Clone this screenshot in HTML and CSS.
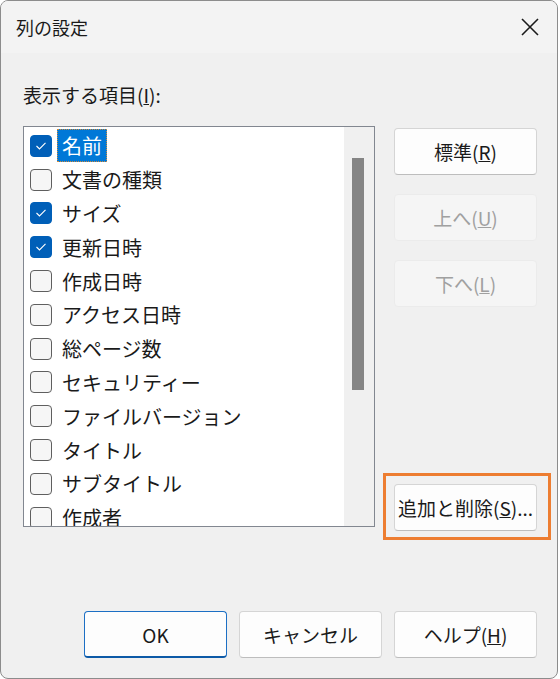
FILE: index.html
```html
<!DOCTYPE html>
<html lang="ja">
<head>
<meta charset="utf-8">
<title>列の設定</title>
<link rel="stylesheet" href="styles.css">
</head>
<body>
<div class="window">
  <div class="titlebar">
    <span class="title">列の設定</span>
    <span class="close">
      <svg width="20" height="20" viewBox="0 0 20 20"><path d="M2 2 L18 18 M18 2 L2 18" stroke="#1a1a1a" stroke-width="1.6" fill="none"/></svg>
    </span>
  </div>
  <div class="content">
    <div class="label">表示する項目(<u>I</u>):</div>
    <div class="main">
      <div class="listbox">
        <div class="items">
          <div class="item"><span class="cb checked"><svg width="12" height="10" viewBox="0 0 12 10"><path d="M1.5 5 L4.5 8 L10.5 1.8" stroke="#fff" stroke-width="1.1" fill="none"/></svg></span><span class="text selected">名前</span></div>
          <div class="item"><span class="cb"></span><span class="text">文書の種類</span></div>
          <div class="item"><span class="cb checked"><svg width="12" height="10" viewBox="0 0 12 10"><path d="M1.5 5 L4.5 8 L10.5 1.8" stroke="#fff" stroke-width="1.1" fill="none"/></svg></span><span class="text">サイズ</span></div>
          <div class="item"><span class="cb checked"><svg width="12" height="10" viewBox="0 0 12 10"><path d="M1.5 5 L4.5 8 L10.5 1.8" stroke="#fff" stroke-width="1.1" fill="none"/></svg></span><span class="text">更新日時</span></div>
          <div class="item"><span class="cb"></span><span class="text">作成日時</span></div>
          <div class="item"><span class="cb"></span><span class="text">アクセス日時</span></div>
          <div class="item"><span class="cb"></span><span class="text">総ページ数</span></div>
          <div class="item"><span class="cb"></span><span class="text">セキュリティー</span></div>
          <div class="item"><span class="cb"></span><span class="text">ファイルバージョン</span></div>
          <div class="item"><span class="cb"></span><span class="text">タイトル</span></div>
          <div class="item"><span class="cb"></span><span class="text">サブタイトル</span></div>
          <div class="item"><span class="cb"></span><span class="text">作成者</span></div>
        </div>
        <div class="scrollbar"><div class="thumb"></div></div>
      </div>
      <div class="side">
        <button class="btn">標準(<u>R</u>)</button>
        <button class="btn disabled">上へ(<u>U</u>)</button>
        <button class="btn disabled">下へ(<u>L</u>)</button>
        <button class="btn annotated">追加と削除(<u>S</u>)...</button>
      </div>
    </div>
  </div>
  <div class="footer">
    <button class="btn default">OK</button>
    <button class="btn">キャンセル</button>
    <button class="btn">ヘルプ(<u>H</u>)</button>
  </div>
</div>
</body>
</html>
```

FILE: styles.css
```css
html, body {
  margin: 0;
  padding: 0;
  background: #ffffff;
}

body {
  font-family: "Noto Sans CJK JP", "Noto Sans", sans-serif;
  color: #1a1a1a;
}

.window {
  width: 558px;
  height: 679px;
  box-sizing: border-box;
  border: 1px solid #8c8c8c;
  border-radius: 8px;
  background: #f0f0f0;
  display: flex;
  flex-direction: column;
  overflow: hidden;
}

.titlebar {
  height: 52px;
  flex: none;
  display: flex;
  align-items: center;
  justify-content: space-between;
  padding: 0 17px 0 15px;
  background: #f3f3f3;
}

.title {
  font-size: 18px;
  line-height: 24px;
}

.close {
  display: flex;
  width: 20px;
  height: 20px;
}

.content {
  padding: 30px 20px 0 22px;
}

.label {
  font-size: 19px;
  line-height: 24px;
  margin-bottom: 19px;
}

.main {
  display: flex;
  gap: 19px;
}

.listbox {
  width: 352px;
  height: 401px;
  box-sizing: border-box;
  border: 1px solid #828790;
  background: #ffffff;
  display: flex;
  overflow: hidden;
}

.items {
  flex: 1;
  padding-top: 2px;
}

.item {
  height: 33.8px;
  display: flex;
  align-items: center;
  padding-left: 6px;
}

.cb {
  width: 22px;
  height: 22px;
  box-sizing: border-box;
  border: 1px solid #5f5f5f;
  border-radius: 4px;
  background: #f6f6f6;
  flex: none;
  display: flex;
  align-items: center;
  justify-content: center;
}

.cb.checked {
  background: #005fb8;
  border-color: #005fb8;
}

.text {
  margin-left: 5px;
  padding: 0 4px;
  font-size: 20px;
  line-height: 31px;
  height: 33px;
  box-sizing: border-box;
  border: 1px solid transparent;
  display: flex;
  align-items: center;
  white-space: nowrap;
}

.text.selected {
  background: #0078d7;
  color: #ffffff;
  border: 1px dotted #d08a3c;
}

.scrollbar {
  width: 30px;
  flex: none;
  background: #f0f0f0;
  padding-top: 31px;
  box-sizing: border-box;
  display: flex;
  justify-content: center;
}

.thumb {
  width: 12px;
  height: 232px;
  background: #858585;
  margin-right: 2px;
}

.side {
  width: 143px;
  display: flex;
  flex-direction: column;
  gap: 19px;
  padding-top: 2px;
}

.btn {
  font-family: "Noto Sans CJK JP", "Noto Sans", sans-serif;
  font-size: 19px;
  color: #1a1a1a;
  height: 47px;
  width: 143px;
  box-sizing: border-box;
  background: #fdfdfd;
  border: 1px solid #d5d5d5;
  border-bottom-color: #bdbdbd;
  border-radius: 4px;
  padding: 0;
  display: flex;
  align-items: center;
  justify-content: center;
  white-space: nowrap;
}

.btn.disabled {
  background: #f5f5f5;
  border-color: #ebebeb;
  color: #a0a0a0;
}

.btn.annotated {
  margin-top: auto;
  position: relative;
  margin-bottom: -4px;
}

.btn.annotated::after {
  content: "";
  position: absolute;
  top: -12px;
  left: -12px;
  right: -15px;
  bottom: -10px;
  border: 3px solid #ed7d31;
}

.footer {
  margin-top: auto;
  display: flex;
  justify-content: flex-end;
  gap: 12px;
  padding: 0 20px 20px 0;
}

.btn.default {
  border: 1px solid #1c6fc4;
  border-bottom: 2px solid #0d5aa7;
}
```
